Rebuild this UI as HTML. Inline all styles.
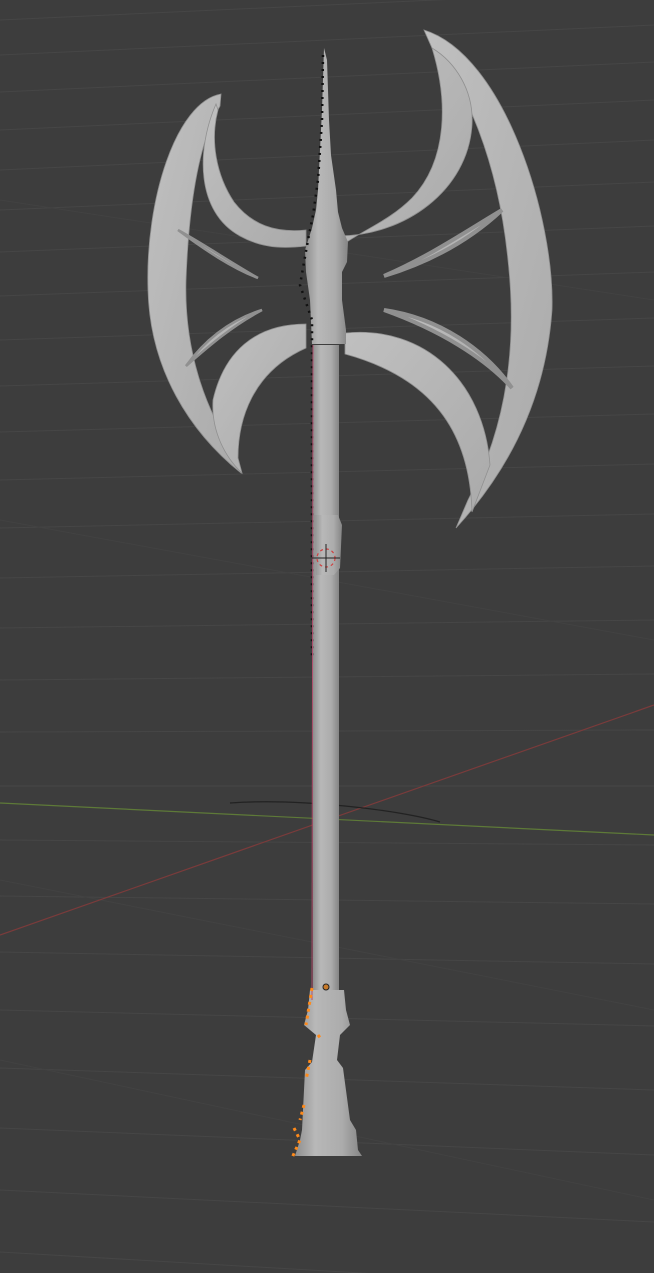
<!DOCTYPE html>
<html><head><style>html,body{margin:0;padding:0;background:#3d3d3d;}svg{display:block}</style></head>
<body>
<svg width="654" height="1273" viewBox="0 0 654 1273" xmlns="http://www.w3.org/2000/svg">
<defs>
<linearGradient id="sh" x1="0" x2="1" y1="0" y2="0">
<stop offset="0" stop-color="#8e8e8e"/><stop offset="0.3" stop-color="#b8b8b8"/><stop offset="0.7" stop-color="#acacac"/><stop offset="1" stop-color="#858585"/></linearGradient>
<linearGradient id="bl" x1="0" x2="1" y1="0" y2="1">
<stop offset="0" stop-color="#c0c0c0"/><stop offset="1" stop-color="#aaaaaa"/></linearGradient>
</defs>
<rect width="654" height="1273" fill="#3d3d3d"/>
<g stroke="#464646" stroke-width="1" fill="none">
<path d="M0,20 L654,-10 M0,55 L654,25 M0,92 L654,62 M0,130 L654,100 M0,170 L654,140 M0,210 L654,182 M0,252 L654,226 M0,296 L654,272 M0,340 L654,318 M0,386 L654,366 M0,432 L654,414 M0,480 L654,464 M0,528 L654,514 M0,578 L654,566 M0,628 L654,620 M0,680 L654,674 M0,732 L654,730 M0,786 L654,786 M0,840 L654,845 M0,896 L654,904 M0,952 L654,964 M0,1010 L654,1026 M0,1068 L654,1090 M0,1128 L654,1155 M0,1190 L654,1222 M0,1252 L654,1290"/>
</g>
<g stroke="#424242" stroke-width="1" fill="none">
<path d="M0,200 L654,300 M0,520 L654,640 M0,880 L654,1010 M0,1060 L654,1200"/>
</g>
<path d="M0,803 L654,835" stroke="#5e7a38" stroke-width="1.2"/>
<path d="M0,935 L654,705" stroke="#7a3b3b" stroke-width="1.2"/>
<path d="M230,803 C 300,798 400,810 440,822" stroke="#222" stroke-width="1.2" fill="none"/>
<g fill="url(#bl)" stroke="#909090" stroke-width="0.8">
<path d="M424,30 C 505,55 555,220 552,310 C 545,410 500,480 456,528 L 468,500 C 505,430 518,350 508,260 C 498,160 465,85 432,48 Z"/>
<path d="M338,236 C 405,236 468,190 472,125 C 474,90 455,62 432,48 C 448,100 448,160 412,198 C 388,222 362,230 338,248 Z"/>
<path d="M345,333 C 425,325 484,382 490,465 L 472,512 C 470,440 440,380 345,354 Z"/>
<path d="M221,94 C 176,102 145,200 148,290 C 150,370 190,432 241,473 L 236,455 C 205,410 184,350 186,280 C 189,200 200,140 220,106 Z"/>
<path d="M216,104 C 196,150 196,212 240,236 C 265,250 290,248 306,246 L 306,230 C 275,233 252,225 234,202 C 216,175 210,140 218,110 Z"/>
<path d="M306,324 C 255,324 224,352 213,400 C 211,432 226,458 242,473 L 238,458 C 238,420 252,372 306,348 Z"/>
<path d="M178,230 C 205,250 232,268 258,278 C 230,262 205,245 178,230 Z" stroke-width="2.5"/>
<path d="M502,210 C 470,240 430,262 384,276 C 430,256 465,232 502,210 Z" stroke-width="4"/>
<path d="M186,366 C 205,340 230,320 262,310 C 232,326 210,345 186,366 Z" stroke-width="2.5"/>
<path d="M384,310 C 440,318 485,350 512,388 C 485,358 440,330 384,310 Z" stroke-width="4"/>
</g>
<g fill="url(#sh)">
<rect x="313" y="345" width="26" height="660"/>
<path d="M324,48 L327,60 L329,120 L331,155 L336,190 L338,212 L342,228 L348,242 L347,262 L342,272 L342,300 L346,330 L346,344 L312,344 L310,300 L306,272 L305,250 L312,228 L316,210 L318,190 L320,150 L322,110 Z"/>
<path d="M314,515 L338,515 L342,525 L340,568 L334,575 L316,575 Z"/>
<path d="M310,990 L344,990 L346,1010 L350,1025 L340,1035 L337,1060 L343,1068 L350,1120 L356,1130 L358,1150 L362,1156 L295,1156 L300,1140 L302,1130 L305,1070 L312,1062 L316,1035 L304,1025 L308,1010 Z"/>
</g>
<g stroke="#111" stroke-width="2.5" fill="none" stroke-dasharray="2 5">
<path d="M323,55 L322,120 L318,180 L313,215 L308,240 L300,285 L312,320 L312,360 L312,500 L312,660"/>
</g>
<path d="M313,345 L312,1000" stroke="#b0506e" stroke-width="1"/>
<g stroke="#ff8a1a" stroke-width="3" fill="none" stroke-dasharray="3 4">
<path d="M312,988 L306,1025 M318,1035 L322,1040 M310,1060 L306,1080 M304,1105 L300,1120 M294,1128 L300,1140 L292,1158"/>
</g>
<circle cx="326" cy="987" r="3" fill="#c87a2a" stroke="#222" stroke-width="1"/>
<circle cx="326" cy="558" r="9" fill="none" stroke="#d04040" stroke-width="1.2" stroke-dasharray="3 3"/>
<path d="M326,544 V572 M312,558 H340" stroke="#222" stroke-width="1"/>
</svg>
</body></html>
